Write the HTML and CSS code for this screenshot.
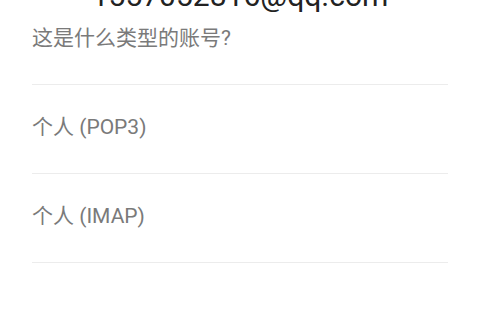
FILE: index.html
```html
<!DOCTYPE html>
<html lang="zh-CN">
<head>
<meta charset="utf-8">
<link rel="stylesheet" href="styles.css">
</head>
<body>
<div class="page">
  <div class="email">1557052816@qq.com</div>
  <div class="question">这是什么类型的账号?</div>
  <ul class="list">
    <li class="item">个人 (POP3)</li>
    <li class="item">个人 (IMAP)</li>
  </ul>
</div>
</body>
</html>
```
FILE: styles.css
```css
html, body {
  margin: 0;
  padding: 0;
  background: #ffffff;
}
body {
  font-family: Roboto, "Noto Sans CJK SC", sans-serif;
  width: 480px;
  height: 329px;
  overflow: hidden;
}
.page {
  padding: 0 32px;
}
.email {
  font-size: 30px;
  line-height: 36px;
  margin-top: -22px;
  color: #222222;
  text-align: center;
}
.question {
  font-size: 21px;
  line-height: 28px;
  color: #7a7a7a;
  margin-top: 10px;
  padding-bottom: 32px;
  border-bottom: 1px solid #ececec;
}
.list {
  list-style: none;
  margin: 0;
  padding: 0;
}
.item {
  font-size: 21px;
  line-height: 28px;
  color: #7a7a7a;
  padding: 28px 0 32px;
  border-bottom: 1px solid #ececec;
}
```
